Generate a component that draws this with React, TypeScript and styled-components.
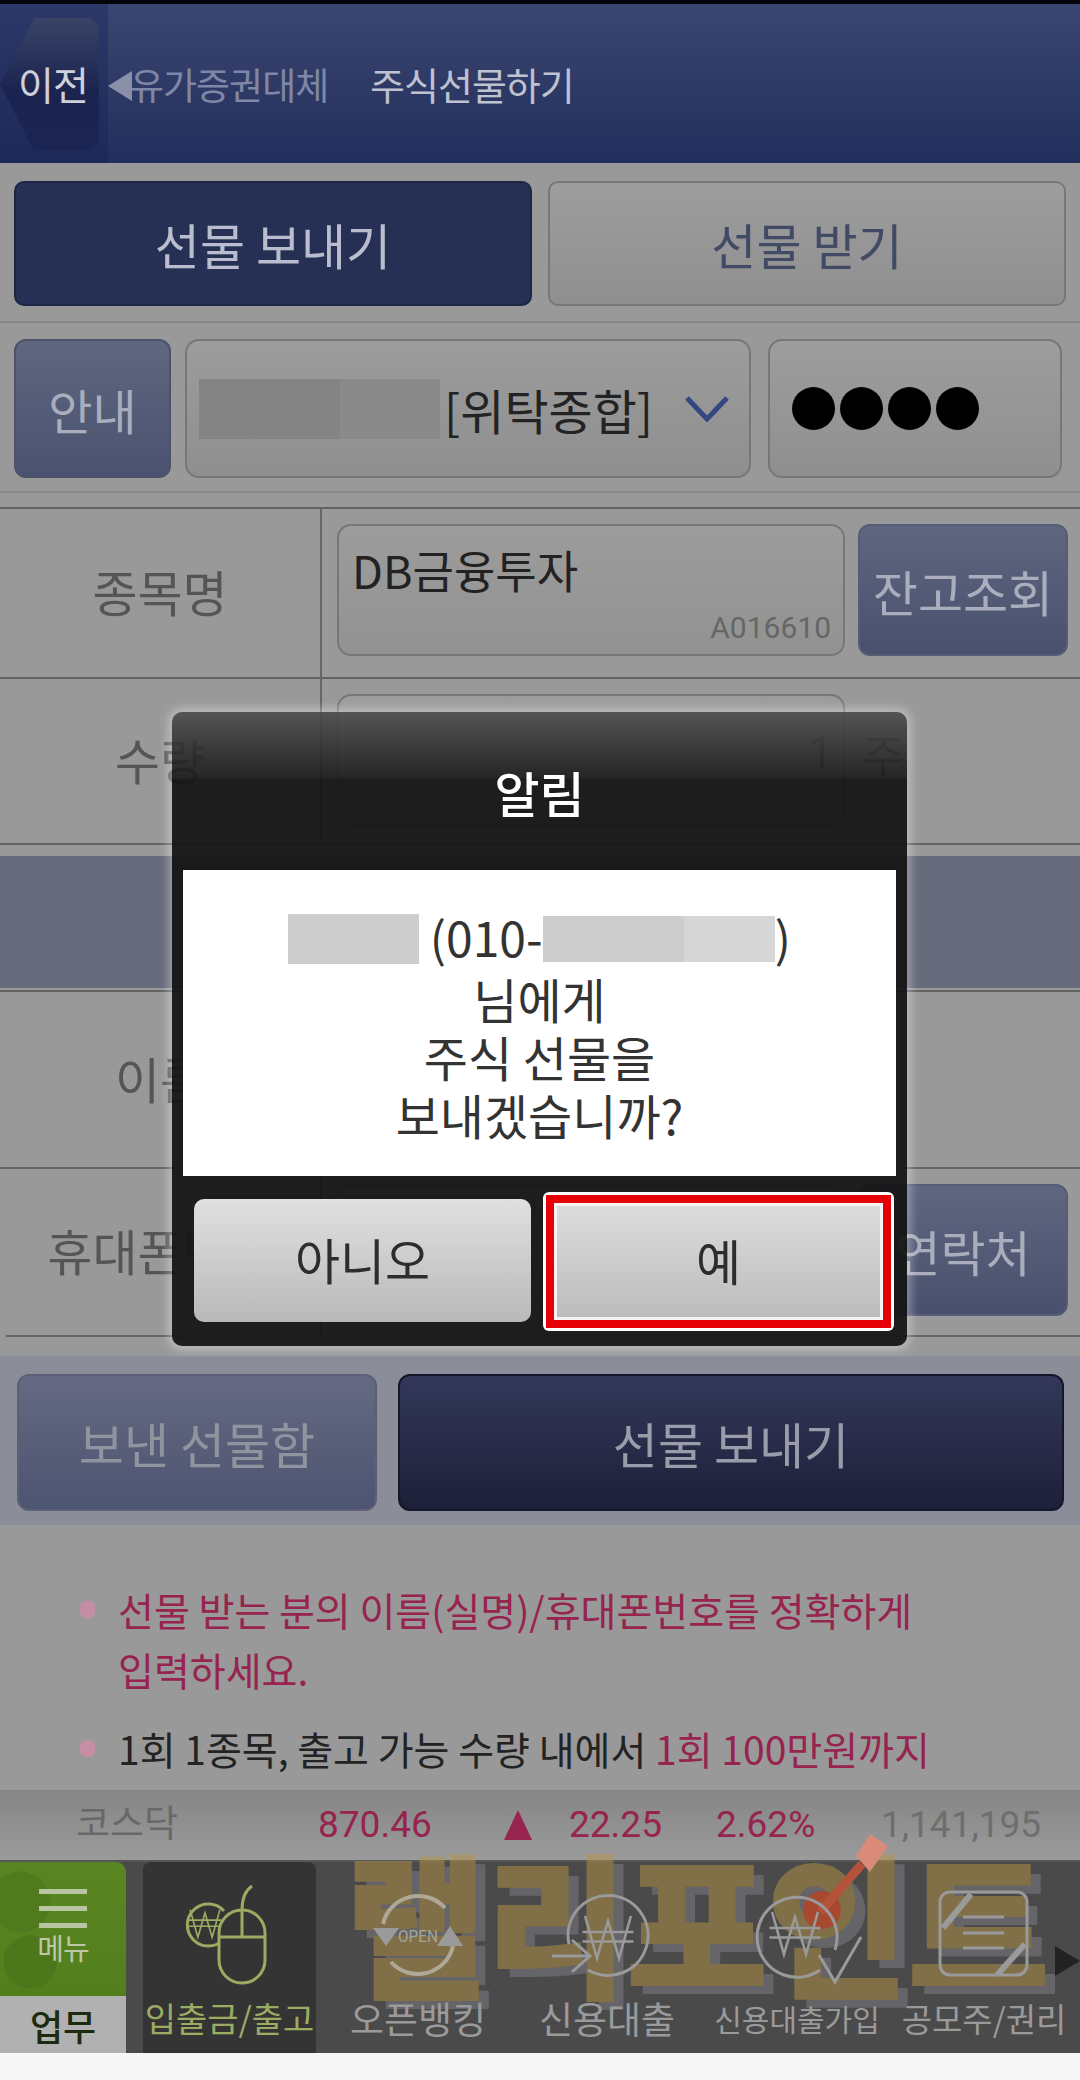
import React from 'react';
import styled, { createGlobalStyle } from 'styled-components';

const Global = createGlobalStyle`
  html, body { margin: 0; padding: 0; background: #f7f7f7; }
  * { box-sizing: border-box; }
  body { font-family: "Noto Sans CJK KR", "Noto Sans", sans-serif; }
`;

const Page = styled.div`position: relative; width: 1080px; height: 2080px; overflow: hidden; background: #999999;`;
const StatusBar = styled.div`height: 4px; background: #05060d;`;
const Header = styled.header`height: 159px; display: flex; align-items: center; background: linear-gradient(#3b4670, #222e5c);`;
const BackZone = styled.div`flex: none; width: 108px; height: 100%; padding-top: 14px; background: linear-gradient(#2c3867, #1d2958);`;
const BackButton = styled.div`
  width: 99px; height: 133px; display: flex; align-items: center; justify-content: center; padding: 0 0 4px 7px;
  clip-path: polygon(0 50%, 34px 0, 90px 0, 99px 8px, 99px 125px, 90px 133px, 34px 133px);
  background: linear-gradient(#3a4366, #1b2450 55%, #1b2553);
  color: #cfd1da; font-size: 39px; letter-spacing: -1px;
`;
const Crumb = styled.div`
  position: relative; flex: none; width: 262px; padding-left: 22px; color: #7f87a6; font-size: 37px; letter-spacing: -1px;
  &::before { content: ""; position: absolute; left: 0; top: 14px; border: 15px solid transparent; border-left: 0; border-right: 24px solid #8a90a9; }
`;
const HeaderTitle = styled.h1`margin: 0; color: #bfc2d0; font-size: 38px; font-weight: 400; letter-spacing: -1px;`;

const TabRow = styled.div`height: 160px; display: flex; gap: 16px; padding: 18px 14px 15px; border-bottom: 2px solid #858585;`;
const Tab = styled.div<{ $on?: boolean }>`
  flex: 1; display: flex; align-items: center; justify-content: center; border-radius: 10px; font-size: 49px;
  color: ${p => (p.$on ? '#b9bdcd' : '#424b66')};
  background: ${p => (p.$on ? '#253054' : 'linear-gradient(#9d9d9d, #8f8f8f)')};
  border: 2px solid ${p => (p.$on ? '#1d2645' : '#787878')};
`;

const AccountRow = styled.div`height: 170px; display: flex; padding: 16px 0 0 14px; border-bottom: 2px solid #888888;`;
const GuideButton = styled.div`
  flex: none; width: 157px; height: 139px; margin-right: 14px; display: flex; align-items: center; justify-content: center; border-radius: 12px;
  background: linear-gradient(#5f6780, #49526f); border: 2px solid #4b5269; color: #a9adbc; font-size: 48px;
`;
const Select = styled.div`
  flex: none; width: 566px; height: 139px; margin-right: 17px; display: flex; align-items: center; padding: 0 20px 0 12px; border-radius: 14px;
  background: linear-gradient(#9c9c9c, #8f8f8f); border: 2px solid #777777; color: #232323; font-size: 48px; white-space: nowrap;
`;
const Redact = styled.span<{ $w: number; $h: number; $c: string; $c2: string; $split: number }>`
  display: inline-block; vertical-align: middle; flex: none;
  width: ${p => p.$w}px; height: ${p => p.$h}px;
  background: linear-gradient(90deg, ${p => p.$c} ${p => p.$split}px, ${p => p.$c2} ${p => p.$split}px);
`;
const MessageRedact = styled(Redact)`position: relative; top: -5px;`;
const Bracket = styled.span`margin-left: 4px; flex: 1;`;
const PasswordBox = styled.div`
  flex: none; width: 294px; height: 139px; display: flex; align-items: center; gap: 5px; padding-left: 22px; border-radius: 14px;
  background: linear-gradient(#9d9d9d, #8f8f8f); border: 2px solid #777777;
`;
const Dot = styled.i`width: 43px; height: 43px; border-radius: 50%; background: #000;`;

const Gap = styled.div<{ $h: number }>`height: ${p => p.$h}px;`;
const Row = styled.div<{ $h: number; $top: number }>`
  position: relative; height: ${p => p.$h}px; display: flex; padding-top: ${p => p.$top}px; border-top: 2px solid #636363;
`;
const Label = styled.div`
  position: absolute; left: 0; top: 0; bottom: 0; width: 322px; display: flex; align-items: center; justify-content: center; padding-bottom: 5px;
  color: #555555; font-size: 49px; border-right: 2px solid #666666;
`;
const Field = styled.div`
  position: relative; flex: none; width: 508px; height: 132px; margin-left: 337px; padding: 16px 13px; border-radius: 14px;
  border: 2px solid #777777; background: linear-gradient(#9c9c9c, #929292); color: #222; font-size: 45px; line-height: 56px;
`;
const Code = styled.span`position: absolute; right: 12px; bottom: 6px; font: 30px/40px Roboto, sans-serif; color: #666;`;
const Unit = styled.span`position: absolute; left: 862px; top: 44px; color: #5e5e5e; font: 46px/60px "Noto Sans CJK KR", sans-serif;`;
const Amount = styled.span`position: absolute; left: 808px; top: 44px; color: #5e5e5e; font: 46px/60px Roboto, sans-serif;`;
const SideButton = styled.div`
  flex: none; width: 210px; height: 132px; margin-left: 13px; display: flex; align-items: center; justify-content: center; border-radius: 12px;
  background: linear-gradient(#5f6680, #48506d); color: #a9adbc; font-size: 49px; border: 2px solid #555c75; white-space: nowrap;
`;
const Band = styled.div`height: 132px; background: #666a7a;`;
const RowEnd = styled.div<{ $inset?: number }>`height: 2px; margin-left: ${p => p.$inset ?? 0}px; background: #636363;`;

const ActionBand = styled.div`height: 169px; display: flex; gap: 21px; padding: 18px 16px 14px 17px; background: #8b8e99;`;
const ActionButton = styled.div<{ $w: number; $main?: boolean }>`
  flex: none; width: ${p => p.$w}px; display: flex; align-items: center; justify-content: center; border-radius: 12px; font-size: 49px;
  color: ${p => (p.$main ? '#9a9caa' : '#90949f')};
  background: ${p => (p.$main ? 'linear-gradient(#33385a, #1d2038)' : 'linear-gradient(#656a82, #4d5470)')};
  border: 2px solid ${p => (p.$main ? '#14162a' : '#5b6078')};
`;

const Notices = styled.div`height: 265px; overflow: hidden; padding: 54px 40px 0 80px; background: #999999;`;
const Notice = styled.p`
  position: relative; margin: 0 0 19px; padding-left: 38px; font-size: 39px; line-height: 60px; color: #232323;
  &::before { content: ""; position: absolute; left: 0; top: 22px; width: 15px; height: 17px; border-radius: 6px; background: #c58ea4; }
`;
const Red = styled.span`color: #96244f;`;

const Ticker = styled.div`
  position: relative; height: 70px; display: grid; grid-template-columns: 76px 242px 186px 65px 147px 165px 1fr; align-items: center;
  background: linear-gradient(#858585, #9b9b9b); font: 37px/40px Roboto, "Noto Sans CJK KR", sans-serif;
`;
const TickCell = styled.span<{ $c: string }>`color: ${p => p.$c}; white-space: nowrap;`;
const UpMark = styled.i`width: 0; height: 0; border: 14px solid transparent; border-top: 0; border-bottom: 30px solid #96244f;`;

const Nav = styled.nav`position: relative; height: 193px; display: flex; background: #4a4a4a; border-top: 2px solid #565656;`;
const Watermark = styled.div`
  position: absolute; left: 345px; top: -33px; font-size: 154px; line-height: 180px; font-weight: 900; letter-spacing: -1px; white-space: nowrap;
  color: rgb(178, 146, 70); -webkit-text-stroke: 2px rgb(178, 146, 70); text-shadow: 11px 9px 0 rgb(125, 125, 135); opacity: 0.52;
`;
const Dart = styled.svg`position: absolute; left: 800px; top: -30px; width: 90px; height: 110px;`;
const MenuColumn = styled.div`position: relative; flex: none; width: 126px; display: flex; flex-direction: column;`;
const MenuTop = styled.div`
  height: 134px; padding-top: 27px; display: flex; flex-direction: column; align-items: center; gap: 12px; border-radius: 0 10px 0 0;
  background: radial-gradient(circle at 20px 40px, #507a1e 0 30px, transparent 31px), radial-gradient(circle at 30px 100px, #4e771c 0 26px, transparent 27px), linear-gradient(#5a8622, #527e1c);
`;
const Bars = styled.div`width: 48px; height: 5px; background: #b9c4a3; box-shadow: 0 17px 0 #b9c4a3, 0 34px 0 #b9c4a3; margin-bottom: 44px;`;
const MenuText = styled.span`color: #bcc8a6; font-size: 29px; line-height: 30px; letter-spacing: -1px; margin-top: -18px;`;
const MenuBottom = styled.div`flex: 1; display: flex; align-items: center; justify-content: center; background: #b1b1b1; color: #1c2a10; font-size: 36px; font-weight: 500;`;
const NavItems = styled.div`position: relative; flex: 1; display: flex; padding-left: 17px;`;
const NavItem = styled.div<{ $w: number; $on?: boolean }>`
  flex: none; width: ${p => p.$w}px; height: 191px; display: flex; flex-direction: column; align-items: center;
  padding-top: 18px; border-radius: 8px 8px 0 0;
  background: ${p => (p.$on ? '#343434' : 'transparent')};
  color: ${p => (p.$on ? '#9cab62' : '#9a9a9a')};
`;
const Icon = styled.svg`width: 110px; height: 110px; flex: none; overflow: visible; fill: none; stroke: currentColor; stroke-width: 3;`;
const NavLabel = styled.span<{ $fs: number }>`margin-top: 3px; font-size: ${p => p.$fs}px; line-height: 50px; white-space: nowrap;`;
const NavArrow = styled.i`position: absolute; right: 0; top: 84px; border: 15px solid transparent; border-right: 0; border-left: 25px solid #222;`;
const BottomStrip = styled.div`height: 27px; background: #f7f7f7;`;

const Modal = styled.section`
  position: absolute; left: 172px; top: 712px; width: 735px; height: 634px; border-radius: 10px;
  background: linear-gradient(rgba(75, 75, 75, 0.88), rgba(22, 22, 22, 0.88) 66px, rgba(20, 20, 20, 0.93) 67px);
  box-shadow: 0 0 10px 4px rgba(255, 255, 255, 0.35);
`;
const ModalTitle = styled.h2`
  height: 158px; margin: 0; display: flex; align-items: center; justify-content: center;
  color: #fff; font-size: 49px; font-weight: 500;
`;
const Message = styled.div`
  height: 306px; margin: 0 11px; padding-top: 37px; background: #fff; text-align: center; color: #333; font-size: 48px; line-height: 58px;
`;
const Actions = styled.div`display: flex; align-items: flex-start; padding: 16px 0 0 22px; gap: 12px;`;
const NoButton = styled.div`
  flex: none; width: 337px; height: 123px; margin-top: 7px; padding-bottom: 4px; display: flex; align-items: center; justify-content: center; border-radius: 10px;
  background: linear-gradient(#e0e0e0, #b9b9b9); color: #2d2d2d; font-size: 49px;
`;
const Highlight = styled.div`
  flex: none; width: 351px; height: 139px; padding: 3px; border-radius: 6px; background: #fff;
`;
const RedRing = styled.div`height: 100%; padding: 8px; background: #e60008;`;
const YesButton = styled.div`
  height: 100%; padding-bottom: 4px; display: flex; align-items: center; justify-content: center; border: 3px solid #f4f4f4;
  background: linear-gradient(#dcdcdc, #bcbcbc); color: #2d2d2d; font-size: 49px;
`;

const Won = ({ x, y, s = 1 }: { x: number; y: number; s?: number }) => (
  <g transform={`translate(${x} ${y}) scale(${s})`}>
    <path d="M-27 -26 L-13 24 L0 -20 L13 24 L27 -26 M-30 -7 H30 M-30 4 H30" />
  </g>
);

export default function App() {
  return (
    <Page>
      <Global />
      <StatusBar />
      <Header>
        <BackZone><BackButton>이전</BackButton></BackZone>
        <Crumb>유가증권대체</Crumb>
        <HeaderTitle>주식선물하기</HeaderTitle>
      </Header>
      <TabRow>
        <Tab $on>선물 보내기</Tab>
        <Tab>선물 받기</Tab>
      </TabRow>
      <AccountRow>
        <GuideButton>안내</GuideButton>
        <Select>
          <Redact $w={241} $h={60} $c="#848484" $c2="#8a8a8a" $split={141} />
          <Bracket>[위탁종합]</Bracket>
          <svg width="44" height="26" viewBox="0 0 44 26" fill="none" stroke="#35477f" strokeWidth="5"><path d="M2 2 L22 23 L42 2" /></svg>
        </Select>
        <PasswordBox><Dot /><Dot /><Dot /><Dot /></PasswordBox>
      </AccountRow>
      <Gap $h={14} />
      <Row $h={170} $top={15}>
        <Label>종목명</Label>
        <Field>DB금융투자<Code>A016610</Code></Field>
        <SideButton>잔고조회</SideButton>
      </Row>
      <Row $h={166} $top={15}>
        <Label>수량</Label>
        <Field />
        <Amount>1</Amount>
        <Unit>주</Unit>
      </Row>
      <RowEnd />
      <Gap $h={11} />
      <Band />
      <Gap $h={2} />
      <Row $h={177} $top={20}>
        <Label>이름</Label>
        <Field />
      </Row>
      <Row $h={168} $top={15}>
        <Label>휴대폰번호</Label>
        <Field />
        <SideButton>연락처</SideButton>
      </Row>
      <RowEnd $inset={6} />
      <Gap $h={19} />
      <ActionBand>
        <ActionButton $w={360}>보낸 선물함</ActionButton>
        <ActionButton $w={666} $main>선물 보내기</ActionButton>
      </ActionBand>
      <Notices>
        <Notice><Red>선물 받는 분의 이름(실명)/휴대폰번호를 정확하게<br />입력하세요.</Red></Notice>
        <Notice>1회 1종목, 출고 가능 수량 내에서 <Red>1회 100만원까지</Red></Notice>
      </Notices>
      <Ticker>
        <span />
        <TickCell $c="#686868">코스닥</TickCell>
        <TickCell $c="#96244f">870.46</TickCell>
        <UpMark />
        <TickCell $c="#96244f">22.25</TickCell>
        <TickCell $c="#96244f">2.62%</TickCell>
        <TickCell $c="#6e6e6e">1,141,195</TickCell>
      </Ticker>
      <Nav>
        <Watermark>랠리포인트</Watermark>
        <Dart viewBox="0 0 90 110" fill="none">
          <circle cx="22" cy="78" r="19" fill="#a6492f" />
          <path d="M20 80 L62 32" stroke="#b5533a" strokeWidth="9" />
          <path d="M56 24 L70 2 L88 14 L70 40 Z" fill="#d98a78" />
        </Dart>
        <MenuColumn>
          <MenuTop><Bars /><MenuText>메뉴</MenuText></MenuTop>
          <MenuBottom>업무</MenuBottom>
        </MenuColumn>
        <NavItems>
          <NavItem $w={173} $on>
            <Icon viewBox="0 0 110 110">
              <g transform="translate(-7 0)">
                <path d="M55 60 A21 21 0 1 1 56 31" />
                <Won x={37} y={44} s={0.55} />
                <rect x="51" y="30" width="46" height="73" rx="23" fill="#343434" />
                <path d="M74 30 V57 M51 57 H97 M74 30 C74 18 78 10 84 6" />
              </g>
            </Icon>
            <NavLabel $fs={34}>입출금/출고</NavLabel>
          </NavItem>
          <NavItem $w={204}>
            <Icon viewBox="0 0 110 110">
              <path d="M20 44 A36 36 0 0 1 82 28 M90 66 A36 36 0 0 1 28 82" stroke="#b0a896" strokeWidth="4" />
              <path d="M10 48 H36 L23 66 Z M74 66 L87 46 L100 66 Z" fill="#9a9a9a" stroke="none" />
              <text x="55" y="62" textAnchor="middle" fontSize="17" fontFamily="Roboto" fill="#a5a59c" stroke="none" textLength="40" lengthAdjust="spacingAndGlyphs">OPEN</text>
            </Icon>
            <NavLabel $fs={37}>오픈뱅킹</NavLabel>
          </NavItem>
          <NavItem $w={174}>
            <Icon viewBox="0 0 110 110">
              <path d="M17 64 A40 40 0 1 1 36 90" />
              <Won x={56} y={58} s={0.85} />
              <path d="M0 76 H36 M20 60 L38 76 L20 92" />
            </Icon>
            <NavLabel $fs={37}>신용대출</NavLabel>
          </NavItem>
          <NavItem $w={206}>
            <Icon viewBox="0 0 110 110">
              <path d="M93 70 A40 40 0 1 0 78 90" />
              <Won x={53} y={54} s={0.85} />
              <path d="M77 75 L93 102 L119 57" />
            </Icon>
            <NavLabel $fs={30}>신용대출가입</NavLabel>
          </NavItem>
          <NavItem $w={168}>
            <Icon viewBox="0 0 110 110">
              <rect x="11" y="12" width="87" height="83" rx="10" />
              <path d="M34 37 H75 M34 53 H75 M34 68 H75" />
              <path d="M42 14 L14 48 M96 64 L68 95" strokeWidth="6" />
            </Icon>
            <NavLabel $fs={33}>공모주/권리</NavLabel>
          </NavItem>
          <NavArrow />
        </NavItems>
      </Nav>
      <BottomStrip />
      <Modal>
        <ModalTitle>알림</ModalTitle>
        <Message>
          <MessageRedact $w={131} $h={50} $c="#cdcdcd" $c2="#cdcdcd" $split={131} /> (010-<MessageRedact $w={232} $h={46} $c="#cdcdcd" $c2="#d6d6d6" $split={141} />)<br />
          님에게<br />
          주식 선물을<br />
          보내겠습니까?
        </Message>
        <Actions>
          <NoButton>아니오</NoButton>
          <Highlight><RedRing><YesButton>예</YesButton></RedRing></Highlight>
        </Actions>
      </Modal>
    </Page>
  );
}
